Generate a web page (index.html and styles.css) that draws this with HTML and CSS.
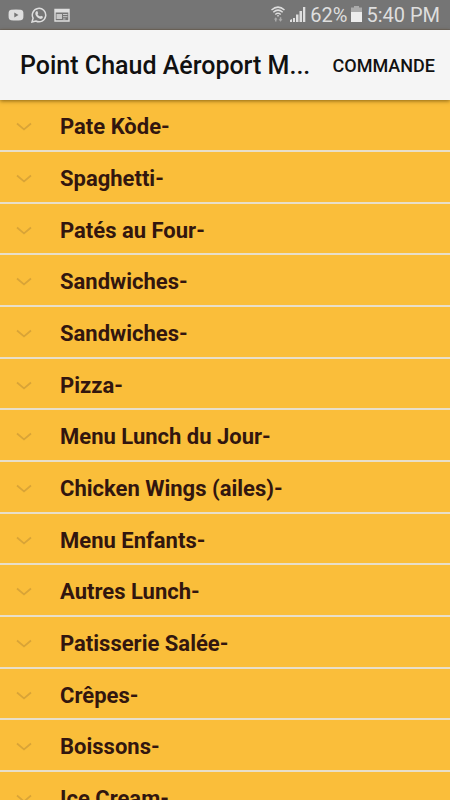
FILE: index.html
```html
<!DOCTYPE html>
<html lang="fr">
<head>
<meta charset="utf-8">
<meta name="viewport" content="width=device-width, initial-scale=1">
<title>Point Chaud Aéroport</title>
<link rel="stylesheet" href="styles.css">
</head>
<body>
<svg class="defs" aria-hidden="true"><symbol id="chevron" viewBox="0 0 16 10"><path d="M1 1.500 8 7.500 15 1.500" fill="none" stroke="currentColor" stroke-width="1.700"/></symbol></svg>
<div class="status">
  <div class="group">
    <svg width="16" height="12" viewBox="0 0 16 12"><path fill="#dedede" fill-rule="evenodd" d="M3 .8Q8 .2 13 .8Q15 1 15.3 3Q15.600 6 15.300 9Q15 11 13 11.200Q8 11.800 3 11.200Q1 11 .7 9Q.4 6 .7 3Q1 1 3 .8ZM6.300 3.600V8.400L10.500 6Z"/></svg>
    <svg width="16" height="16" viewBox="0 0 16 16"><path d="M1 15l1.100-3.800A6.700 6.700 0 1 1 4.900 14Z" fill="none" stroke="#dedede" stroke-width="1.500"/><path fill="#dedede" d="M5.300 4.200 6.300 4.100 7.200 6.200 6.500 7.200Q7.400 8.900 9.200 9.600L10 8.700 12 9.700Q12 11.800 9.900 11.900Q6.500 11.500 4.500 7.700Q3.700 5.600 5.300 4.200Z"/></svg>
    <svg width="16" height="14" viewBox="0 0 16 14"><path d="M1 1.500H15V13H1Z" fill="none" stroke="#dedede" stroke-width="1.400"/><path fill="#dedede" d="M1 1H15V4.500H1Z"/><path fill="#c8c8c8" d="M2.500 6H8V11H2.500Z"/><path d="M9 6.500H13.500M9 8.700H13.500M9 11H11.500" stroke="#c8c8c8"/></svg>
  </div>
  <div class="group readings">
    <svg width="14" height="17" viewBox="0 0 14 17"><g fill="none" stroke="#dedede" stroke-width="1.500"><path d="M.5 4Q7-1.800 13.500 4M2.300 6.300Q7 2 11.700 6.300M4.300 8.500Q7 6 9.700 8.500"/></g><path d="M5.800 9.300H8.200L7 11Z" fill="#dedede"/><path fill="#aaa" d="M4 15.500V13.500H2.800L4.800 11.300 6.500 13.500H5.500V15.500ZM8.800 11.300V13.300H7.500L9.500 15.700 11.500 13.300H10.300V11.300Z"/></svg>
    <svg class="signal" width="16" height="16" viewBox="0 0 16 16"><path fill="#dedede" d="M0 16V14L2 13V16ZM3 12H5V16H3ZM6 8.500H8.500V16H6ZM9.500 5H12V16H9.500ZM13 1H15.300V16H13Z"/></svg>
    <span>62%</span>
    <svg width="11" height="16" viewBox="0 0 11 16"><path fill="#aaa" d="M3 0H8V1.500H11V6H0V1.500H3Z"/><path fill="#ededed" d="M0 6H11V16H0Z"/></svg>
    <span>5:40 PM</span>
  </div>
</div>
<header class="bar">
  <h1 class="title">Point Chaud Aéroport M...</h1>
  <button class="order" type="button">COMMANDE</button>
</header>
<main>
  <ul class="menu">
    <li class="item"><button class="row" type="button"><svg class="chevron"><use href="#chevron"/></svg>Pate Kòde-</button></li>
    <li class="item"><button class="row" type="button"><svg class="chevron"><use href="#chevron"/></svg>Spaghetti-</button></li>
    <li class="item"><button class="row" type="button"><svg class="chevron"><use href="#chevron"/></svg>Patés au Four-</button></li>
    <li class="item"><button class="row" type="button"><svg class="chevron"><use href="#chevron"/></svg>Sandwiches-</button></li>
    <li class="item"><button class="row" type="button"><svg class="chevron"><use href="#chevron"/></svg>Sandwiches-</button></li>
    <li class="item"><button class="row" type="button"><svg class="chevron"><use href="#chevron"/></svg>Pizza-</button></li>
    <li class="item"><button class="row" type="button"><svg class="chevron"><use href="#chevron"/></svg>Menu Lunch du Jour-</button></li>
    <li class="item"><button class="row" type="button"><svg class="chevron"><use href="#chevron"/></svg>Chicken Wings (ailes)-</button></li>
    <li class="item"><button class="row" type="button"><svg class="chevron"><use href="#chevron"/></svg>Menu Enfants-</button></li>
    <li class="item"><button class="row" type="button"><svg class="chevron"><use href="#chevron"/></svg>Autres Lunch-</button></li>
    <li class="item"><button class="row" type="button"><svg class="chevron"><use href="#chevron"/></svg>Patisserie Salée-</button></li>
    <li class="item"><button class="row" type="button"><svg class="chevron"><use href="#chevron"/></svg>Crêpes-</button></li>
    <li class="item"><button class="row" type="button"><svg class="chevron"><use href="#chevron"/></svg>Boissons-</button></li>
    <li class="item"><button class="row" type="button"><svg class="chevron"><use href="#chevron"/></svg>Ice Cream-</button></li>
  </ul>
</main>
</body>
</html>
```
FILE: styles.css
```css
* {
  box-sizing: border-box;
}

body {
  display: flex;
  flex-direction: column;
  height: 100vh;
  margin: 0;
  overflow: hidden;
  background: #fabe3a;
  font-family: Roboto, "Liberation Sans", sans-serif;
}

button {
  border: 0;
  padding: 0;
  background: none;
  font-family: inherit;
  cursor: pointer;
}

.defs {
  position: absolute;
  width: 0;
  height: 0;
}

.status {
  display: flex;
  flex: none;
  align-items: center;
  justify-content: space-between;
  height: 30px;
  padding: 0 10px 0 8px;
  background: #757575;
  border-bottom: 1px solid #6b6868;
  color: #dedede;
  font-size: 20px;
  line-height: 24px;
}

.group {
  display: flex;
  align-items: center;
  gap: 7px;
}

.readings {
  gap: 4px;
}

.readings svg {
  margin-bottom: 1px;
}

.signal {
  margin-left: 1px;
}

.bar {
  display: flex;
  flex: none;
  align-items: center;
  justify-content: space-between;
  height: 70px;
  padding: 2px 15px 0 20px;
  position: relative;
  background: #f5f5f5;
  box-shadow: 0 1px 4px rgba(90, 60, 0, 0.7);
  color: #111;
}

.title {
  margin: 0;
  overflow: hidden;
  font-size: 25px;
  font-weight: 500;
  line-height: 30px;
  text-overflow: ellipsis;
  white-space: nowrap;
}

.order {
  flex: none;
  color: #111;
  font-size: 18px;
  font-weight: 500;
  line-height: 24px;
}

main {
  flex: 1;
  min-height: 0;
  overflow: hidden;
}

.menu {
  margin: 0;
  padding: 0;
  list-style: none;
}

.item {
  height: 52px;
  border-bottom: 2px solid #e8dfca;
}

.item:nth-child(3n) {
  height: 51px;
}

.row {
  display: flex;
  align-items: center;
  gap: 28px;
  width: 100%;
  height: 100%;
  padding: 4px 16px 0;
  color: #32160f;
  font-size: 22px;
  font-weight: 700;
  line-height: 26px;
  text-align: left;
}

.chevron {
  flex: none;
  width: 16px;
  height: 10px;
  color: #d9a437;
}
```
